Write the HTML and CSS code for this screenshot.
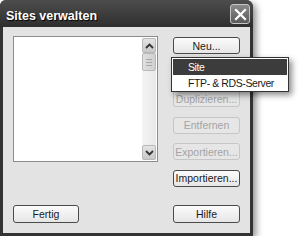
FILE: index.html
```html
<!DOCTYPE html>
<html lang="de">
<head>
    <meta charset="UTF-8">
    <title>Sites verwalten</title>
    <link rel="stylesheet" href="styles.css">
</head>
<body>
    <div class="window">
        <div class="titlebar">
            <span class="title">Sites verwalten</span>
            <button class="close">
                <svg width="13" height="13" viewBox="0 0 13 13">
                    <path d="M2 2 L11 11 M11 2 L2 11" stroke="#fff" stroke-width="2.2" stroke-linecap="square"/>
                </svg>
            </button>
        </div>

        <div class="content">
            <div class="left-col">
                <div class="listbox">
                    <div class="list"></div>
                    <div class="scrollbar">
                        <div class="sb-btn">
                            <svg width="9" height="6" viewBox="0 0 9 6"><path d="M1 5 L4.5 1.5 L8 5" fill="none" stroke="#333" stroke-width="1.8"/></svg>
                        </div>
                        <div class="sb-thumb">
                            <span></span><span></span><span></span>
                        </div>
                        <div class="sb-track"></div>
                        <div class="sb-btn">
                            <svg width="9" height="6" viewBox="0 0 9 6"><path d="M1 1 L4.5 4.5 L8 1" fill="none" stroke="#333" stroke-width="1.8"/></svg>
                        </div>
                    </div>
                </div>
                <button class="btn">Fertig</button>
            </div>

            <div class="right-col">
                <div class="btn-group">
                    <button class="btn">Neu...</button>
                    <!-- covered by the popup menu -->
                    <button class="btn" disabled></button>
                    <button class="btn" disabled>Duplizieren...</button>
                    <button class="btn" disabled>Entfernen</button>
                    <button class="btn" disabled>Exportieren...</button>
                    <button class="btn">Importieren...</button>
                </div>
                <button class="btn">Hilfe</button>
            </div>
        </div>

        <div class="menu">
            <div class="menu-item selected">Site</div>
            <div class="menu-item">FTP- &amp; RDS-Server</div>
        </div>
    </div>
</body>
</html>
```

FILE: styles.css
```css
body {
    margin: 0;
    background-color: #ffffff;
    font-family: "Liberation Sans", Arial, sans-serif;
}
.window {
    position: relative;
    width: 253px;
    height: 236px;
    display: flex;
    flex-direction: column;
    background-color: #333333;
    border-radius: 6px 7px 0 0;
    box-shadow: 3px 3px 7px rgba(0, 0, 0, 0.45);
}
.titlebar {
    height: 27px;
    display: flex;
    align-items: center;
    justify-content: space-between;
    padding: 0 3px 0 6px;
    background: linear-gradient(#4d4d4d, #2e2e2e);
    border-radius: 6px 7px 0 0;
}
.title {
    color: #ffffff;
    font-size: 12.5px;
    font-weight: bold;
    margin-top: 4px;
    text-shadow: 1px 1px 1px #000000;
}
.close {
    width: 20px;
    height: 20px;
    padding: 0;
    margin-top: 1px;
    display: flex;
    align-items: center;
    justify-content: center;
    background: linear-gradient(#8a8a8a, #5a5a5a);
    border: 1px solid #c4c4c4;
    border-radius: 3px;
}
.content {
    flex: 1;
    display: flex;
    gap: 15px;
    margin: 0 3px 3px 3px;
    padding: 9px 10px 10px 10px;
    background-color: #e3e3e3;
}
.left-col {
    width: 145px;
    display: flex;
    flex-direction: column;
    justify-content: space-between;
}
.listbox {
    height: 126px;
    box-sizing: border-box;
    display: flex;
    padding: 1px;
    background-color: #ffffff;
    border: 1px solid #8c8c8c;
}
.list {
    flex: 1;
}
.scrollbar {
    width: 14px;
    display: flex;
    flex-direction: column;
    background: linear-gradient(to right, #f4f4f4, #e8e8e8);
}
.sb-btn {
    height: 15px;
    box-sizing: border-box;
    display: flex;
    align-items: center;
    justify-content: center;
    background: linear-gradient(#e4e4e4, #c8c8c8);
    border: 1px solid #b8b8b8;
    border-radius: 2px;
}
.sb-thumb {
    height: 18px;
    box-sizing: border-box;
    display: flex;
    flex-direction: column;
    align-items: center;
    justify-content: center;
    gap: 2px;
    background: linear-gradient(to right, #e0e0e0, #cfcfcf);
    border: 1px solid #b8b8b8;
    border-radius: 2px;
}
.sb-thumb span {
    width: 6px;
    height: 1px;
    background-color: #a8a8a8;
}
.sb-track {
    flex: 1;
}
.right-col {
    width: 67px;
    padding-top: 1px;
    display: flex;
    flex-direction: column;
    justify-content: space-between;
}
.btn-group {
    display: flex;
    flex-direction: column;
    gap: 9.5px;
}
.btn {
    height: 17px;
    width: 100%;
    padding: 0;
    box-sizing: border-box;
    font-family: "Liberation Sans", Arial, sans-serif;
    font-size: 10.5px;
    color: #1a1a1a;
    background: linear-gradient(#fbfbfb, #e6e6e6);
    border: 1px solid #4a4a4a;
    border-radius: 3px;
}
.left-col .btn {
    width: 66px;
    height: 18px;
}
.right-col > .btn {
    height: 18px;
}
.btn:disabled {
    color: #a4a4a4;
    background: #e6e6e6;
    border-color: #c6c6c6;
}
.menu {
    position: absolute;
    left: 171px;
    top: 57px;
    width: 118px;
    height: 35px;
    box-sizing: border-box;
    padding: 1px;
    background-color: #ffffff;
    border: 1px solid #333333;
    box-shadow: 3px 3px 6px rgba(0, 0, 0, 0.45);
}
.menu-item {
    height: 16px;
    line-height: 16px;
    padding-left: 15px;
    font-size: 10.5px;
    letter-spacing: -0.4px;
    color: #1a1a1a;
}
.menu-item.selected {
    background-color: #3c3c3c;
    color: #ffffff;
}
```
